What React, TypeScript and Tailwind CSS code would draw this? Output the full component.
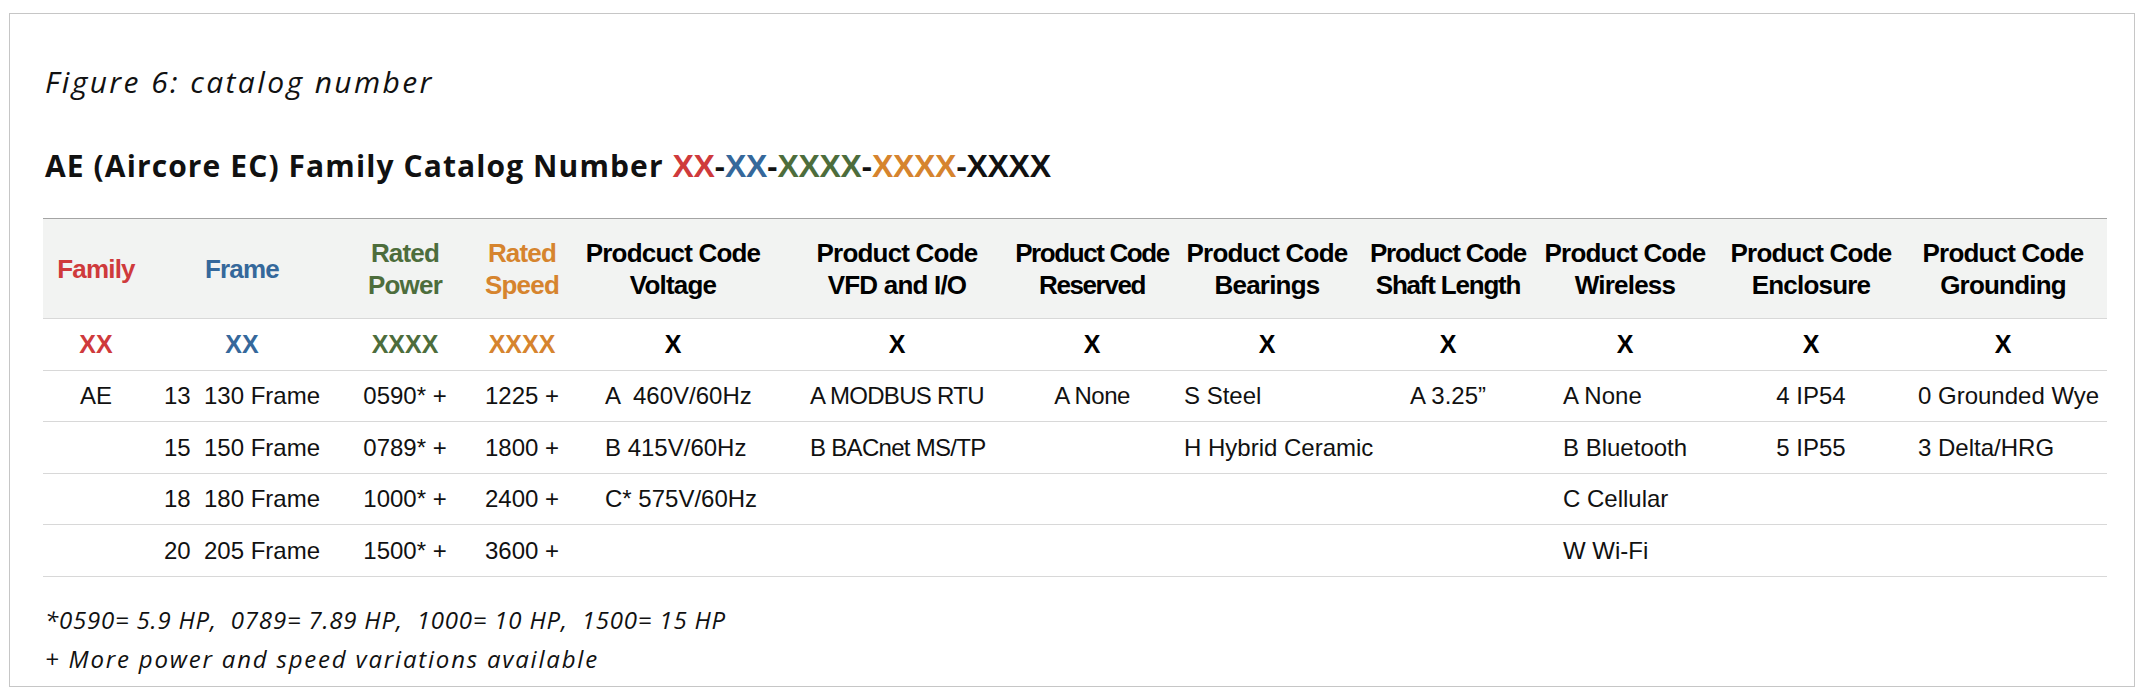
const red = 'text-[#cf3a3c]';
const blue = 'text-[#35689b]';
const green = 'text-[#4d6d3c]';
const orange = 'text-[#d6842e]';

const gridCols =
    'grid grid-cols-[106px_186px_140px_94px_208px_240px_150px_200px_162px_192px_180px_204px]';

type Header = { lines: string[]; color?: string; tracking?: string };

const headers: Header[] = [
    { lines: ['Family'], color: red },
    { lines: ['Frame'], color: blue },
    { lines: ['Rated', 'Power'], color: green },
    { lines: ['Rated', 'Speed'], color: orange },
    { lines: ['Prodcuct Code', 'Voltage'] },
    { lines: ['Product Code', 'VFD and I/O'] },
    { lines: ['Product Code', 'Reserved'], tracking: 'tracking-[-1.4px]' },
    { lines: ['Product Code', 'Bearings'] },
    { lines: ['Product Code', 'Shaft Length'], tracking: 'tracking-[-1.2px]' },
    { lines: ['Product Code', 'Wireless'] },
    { lines: ['Product Code', 'Enclosure'] },
    { lines: ['Product Code', 'Grounding'] },
];

const codes = [
    { text: 'XX', color: red },
    { text: 'XX', color: blue },
    { text: 'XXXX', color: green },
    { text: 'XXXX', color: orange },
    { text: 'X' },
    { text: 'X' },
    { text: 'X' },
    { text: 'X' },
    { text: 'X' },
    { text: 'X' },
    { text: 'X' },
    { text: 'X' },
];

// how each data column sits in its cell
const align = [
    'justify-center',
    'justify-center',
    'justify-center',
    'justify-center',
    'justify-start pl-[36px]',
    'justify-start pl-[33px] tracking-[-0.7px]',
    'justify-center tracking-[-0.5px]',
    'justify-start pl-[17px]',
    'justify-center',
    'justify-start pl-[34px]',
    'justify-center',
    'justify-start pl-[17px]',
];

const rows = [
    ['AE', '13  130 Frame', '0590* +', '1225 +', 'A  460V/60Hz', 'A MODBUS RTU', 'A None', 'S Steel', 'A 3.25\u201d', 'A None', '4 IP54', '0 Grounded Wye'],
    ['', '15  150 Frame', '0789* +', '1800 +', 'B 415V/60Hz', 'B BACnet MS/TP', '', 'H Hybrid Ceramic', '', 'B Bluetooth', '5 IP55', '3 Delta/HRG'],
    ['', '18  180 Frame', '1000* +', '2400 +', 'C* 575V/60Hz', '', '', '', '', 'C Cellular', '', ''],
    ['', '20  205 Frame', '1500* +', '3600 +', '', '', '', '', '', 'W Wi-Fi', '', ''],
];

const rowHeights = ['h-[51px]', 'h-[52px]', 'h-[51px]', 'h-[52px]'];

export default function App() {
    return (
        <main className="w-[2148px] h-[696px] bg-white pt-[13px] pl-[9px]">
            <div className="w-[2126px] h-[674px] border border-[#c6c6c6] pl-[33px] pr-[26px]">
                <h1 className="ml-[2px] mt-[50px] font-['Open_Sans',sans-serif] italic font-normal text-[30px] leading-[36px] tracking-[2.4px] text-[#111]">
                    Figure 6: catalog number
                </h1>
                <h2 className="ml-[2px] mt-[48px] font-['Open_Sans',sans-serif] font-bold text-[30px] leading-[36px] text-[#111]">
                    <span className="tracking-[1.1px]">AE (Aircore EC) Family Catalog Number </span>
                    <span className="font-['Liberation_Sans',Arial,sans-serif] text-[32px] tracking-[-0.3px]">
                        <span className={red}>XX</span>-<span className={blue}>XX</span>-
                        <span className={green}>XXXX</span>-<span className={orange}>XXXX</span>-XXXX
                    </span>
                </h2>

                <div className="mt-[34px] w-[2064px] font-['Liberation_Sans',Arial,sans-serif] text-[#111]">
                    <div className={`${gridCols} h-[101px] bg-[#f2f3f2] border-t border-b border-t-[#a4a4a4] border-b-[#d8d8d8]`}>
                        {headers.map((h, i) => (
                            <div
                                key={i}
                                className={`flex flex-col items-center justify-center whitespace-nowrap font-bold text-[26px] leading-[32px] ${h.tracking ?? 'tracking-[-0.8px]'} ${h.color ?? 'text-black'}`}
                            >
                                {h.lines.map((l) => (
                                    <span key={l}>{l}</span>
                                ))}
                            </div>
                        ))}
                    </div>

                    <div className={`${gridCols} h-[52px] border-b border-[#d8d8d8]`}>
                        {codes.map((c, i) => (
                            <div
                                key={i}
                                className={`flex items-center justify-center font-bold text-[25px] ${c.color ?? 'text-black'}`}
                            >
                                {c.text}
                            </div>
                        ))}
                    </div>

                    {rows.map((row, r) => (
                        <div key={r} className={`${gridCols} ${rowHeights[r]} border-b border-[#d8d8d8]`}>
                            {row.map((cell, i) => (
                                <div
                                    key={i}
                                    className={`flex items-center whitespace-pre text-[24px] ${align[i]}`}
                                >
                                    {cell}
                                </div>
                            ))}
                        </div>
                    ))}
                </div>

                <div className="ml-[2px] mt-[23px] font-['Open_Sans',sans-serif] italic font-normal text-[24px] leading-[39px] text-[#111]">
                    <p className="whitespace-pre tracking-[0.8px]">
                        *0590= 5.9 HP,  0789= 7.89 HP,  1000= 10 HP,  1500= 15 HP
                    </p>
                    <p className="tracking-[1.8px]">+ More power and speed variations available</p>
                </div>
            </div>
        </main>
    );
}
